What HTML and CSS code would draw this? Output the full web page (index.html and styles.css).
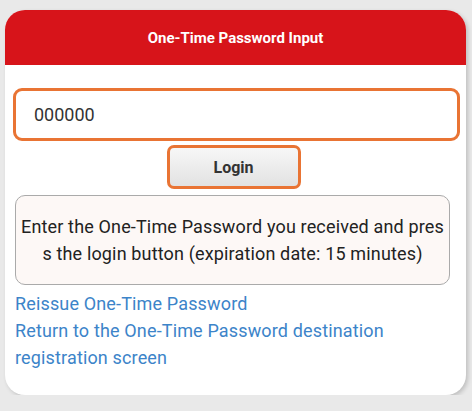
FILE: index.html
```html
<!DOCTYPE html>
<html lang="en">
<head>
  <meta charset="UTF-8">
  <meta name="viewport" content="width=device-width, initial-scale=1.0">
  <title>One-Time Password Input</title>
  <link rel="stylesheet" href="styles.css">
</head>
<body>
  <div class="card">
    <div class="card-header">One-Time Password Input</div>
    <div class="card-body">
      <input class="otp" value="000000">
      <div class="actions">
        <button class="login">Login</button>
      </div>
      <p class="notice">Enter the One-Time Password you received and pres s the login button (expiration date: 15 minutes)</p>
      <div class="links">
        <a href="#">Reissue One-Time Password</a>
        <a href="#">Return to the One-Time Password destination registration screen</a>
      </div>
    </div>
  </div>
</body>
</html>
```

FILE: styles.css
```css
body {
    font-family: Roboto, "Liberation Sans", sans-serif;
    margin: 0;
    padding: 10px 6px 0 5px;
    background-color: #e9e9e9;
}

.card {
    background: #fff;
    border-radius: 20px;
    box-shadow: 2px 2px 4px rgba(0, 0, 0, 0.18);
    overflow: hidden;
    height: 385px;
}

.card-header {
    background: #d7141a;
    color: #fff;
    font-weight: bold;
    font-size: 15px;
    text-align: center;
    height: 55px;
    line-height: 56px;
}

.card-body {
    padding: 23px 6px 0 8px;
}

.otp {
    display: block;
    width: 100%;
    height: 53px;
    box-sizing: border-box;
    border: 3px solid #e97434;
    border-radius: 9px;
    padding: 0 18px;
    font-family: Roboto, sans-serif;
    font-size: 18px;
    color: #333;
    outline: none;
}

.actions {
    display: flex;
    justify-content: center;
    margin-top: 4px;
    padding-right: 6px;
}

.login {
    width: 134px;
    height: 44px;
    border: 3px solid #e97434;
    border-radius: 7px;
    background: linear-gradient(#f7f7f7, #e2e2e2);
    font-family: Roboto, sans-serif;
    font-weight: bold;
    font-size: 16px;
    color: #333;
}

.notice {
    margin: 6px 10px 0 2px;
    border: 1px solid #aaa;
    border-radius: 10px;
    background: #fdf8f6;
    padding: 17px 2px 17px;
    text-align: center;
    font-size: 18px;
    letter-spacing: 0.15px;
    line-height: 27px;
    color: #222;
}

.links {
    display: flex;
    flex-direction: column;
    padding: 5px 2px;
    font-size: 18px;
    letter-spacing: 0.15px;
    line-height: 27px;
}

.links a {
    color: #3c84c9;
    text-decoration: none;
}
```
